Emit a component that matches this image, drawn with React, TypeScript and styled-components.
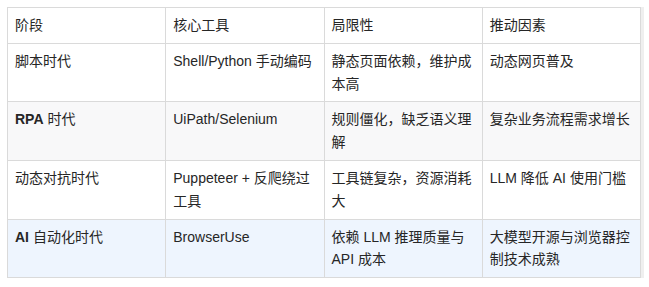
import React from "react";
import styled, { createGlobalStyle } from "styled-components";

const Global = createGlobalStyle`
  html, body { margin: 0; padding: 0; background: #ffffff; }
  body {
    font-family: "Liberation Sans", "Noto Sans CJK SC", sans-serif;
    color: #262626;
  }
`;

const Wrap = styled.div`
  padding: 7px;
  width: 649px;
  box-sizing: border-box;
`;

const Scroller = styled.div`
  position: relative;
  width: 634px;
  &::after {
    content: "";
    position: absolute;
    top: 0;
    bottom: 0;
    right: -3px;
    width: 3px;
    background: #efefef;
  }
`;

const Table = styled.table`
  width: 634px;
  border-collapse: collapse;
  table-layout: fixed;
  font-size: 14px;
  line-height: 22.8px;
`;

const Cell = styled.td`
  border: 1px solid #dadada;
  padding: 6px 7px;
  vertical-align: top;
  text-align: left;
  font-weight: 400;
`;

const HeadCell = styled(Cell).attrs({ as: "th" })``;

const Row = styled.tr<{ $tone?: "plain" | "gray" | "blue" }>`
  background: ${(p) =>
    p.$tone === "gray" ? "#f8f8f9" : p.$tone === "blue" ? "#eef5fe" : "#ffffff"};
`;

const Latin = styled.b`
  font-weight: 700;
`;

type RowData = {
  stage: React.ReactNode;
  tool: string;
  limit: string;
  driver: string;
  tone: "plain" | "gray" | "blue";
};

const rows: RowData[] = [
  { stage: "脚本时代", tool: "Shell/Python 手动编码", limit: "静态页面依赖，维护成本高", driver: "动态网页普及", tone: "plain" },
  { stage: <><Latin>RPA</Latin> 时代</>, tool: "UiPath/Selenium", limit: "规则僵化，缺乏语义理解", driver: "复杂业务流程需求增长", tone: "gray" },
  { stage: "动态对抗时代", tool: "Puppeteer + 反爬绕过工具", limit: "工具链复杂，资源消耗大", driver: "LLM 降低 AI 使用门槛", tone: "plain" },
  { stage: <><Latin>AI</Latin> 自动化时代</>, tool: "BrowserUse", limit: "依赖 LLM 推理质量与 API 成本", driver: "大模型开源与浏览器控制技术成熟", tone: "blue" },
];

export default function App() {
  return (
    <>
      <Global />
      <Wrap>
        <Scroller>
          <Table>
            <thead>
              <Row>
                <HeadCell>阶段</HeadCell>
                <HeadCell>核心工具</HeadCell>
                <HeadCell>局限性</HeadCell>
                <HeadCell>推动因素</HeadCell>
              </Row>
            </thead>
            <tbody>
              {rows.map((r, i) => (
                <Row key={i} $tone={r.tone}>
                  <Cell>{r.stage}</Cell>
                  <Cell>{r.tool}</Cell>
                  <Cell>{r.limit}</Cell>
                  <Cell>{r.driver}</Cell>
                </Row>
              ))}
            </tbody>
          </Table>
        </Scroller>
      </Wrap>
    </>
  );
}
